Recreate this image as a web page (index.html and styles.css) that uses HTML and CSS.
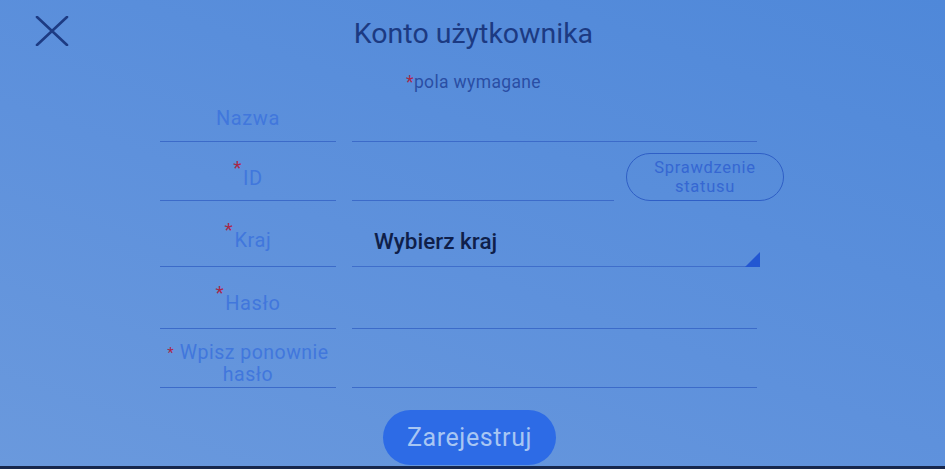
FILE: index.html
```html
<!DOCTYPE html>
<html lang="pl">
<head>
<meta charset="utf-8">
<title>Konto użytkownika</title>
<link rel="stylesheet" href="styles.css">
</head>
<body>
<div class="screen">
  <header class="header">
    <button class="close" aria-label="Zamknij">
      <svg width="34" height="30" viewBox="0 0 34 30"><path d="M2 1 L32 29 M32 1 L2 29" stroke="#1d3b83" stroke-width="2.6" fill="none" stroke-linecap="round"/></svg>
    </button>
    <h1 class="title">Konto użytkownika</h1>
    <span></span>
  </header>
  <p class="note"><span class="req">*</span>pola wymagane</p>
  <div class="form">
    <div class="row r1">
      <div class="label"><span>Nazwa</span></div>
      <div class="field"></div>
    </div>
    <div class="row r2">
      <div class="label"><span><sup class="req">*</sup>ID</span></div>
      <div class="field split">
        <div class="line"></div>
        <button class="status">Sprawdzenie<br>statusu</button>
      </div>
    </div>
    <div class="row r3">
      <div class="label"><span><sup class="req">*</sup>Kraj</span></div>
      <div class="field select"><span>Wybierz kraj</span><span class="tri"></span></div>
    </div>
    <div class="row r4">
      <div class="label"><span><sup class="req">*</sup>Hasło</span></div>
      <div class="field"></div>
    </div>
    <div class="row r5">
      <div class="label two"><span><span class="req small">*</span> Wpisz ponownie<br>hasło</span></div>
      <div class="field"></div>
    </div>
  </div>
  <div class="actions">
    <button class="submit">Zarejestruj</button>
  </div>
  <div class="bezel"></div>
</div>
</body>
</html>
```
FILE: styles.css
```css
* { box-sizing: border-box; }
html, body { margin: 0; padding: 0; }
body {
  width: 945px;
  height: 469px;
  overflow: hidden;
  font-family: Roboto, "Noto Sans", "Liberation Sans", sans-serif;
}
.screen {
  width: 945px;
  height: 469px;
  display: flex;
  flex-direction: column;
  background: linear-gradient(20deg, #6a99dd 0%, #5e91dc 45%, #4f88d9 100%);
}
.header {
  display: grid;
  grid-template-columns: 1fr auto 1fr;
  align-items: center;
  height: 68px;
  padding: 6px 0 0 0;
}
.close {
  border: 0;
  background: none;
  padding: 0;
  width: 34px;
  height: 30px;
  justify-self: start;
  margin-top: -12px;
  margin-left: 35px;
}
.close svg { display: block; }
.title {
  margin: 0;
  font-size: 28.5px;
  font-weight: 400;
  color: #1c3a82;
  margin-top: -8px;
  padding-left: 2px;
}
.note {
  margin: 4px 0 0;
  text-align: center;
  font-size: 17.5px;
  letter-spacing: 0.35px;
  color: #2a4ea4;
  height: 24px;
  line-height: 20px;
  padding-left: 2px;
}
.req { color: #a8284a; }
.form {
  margin-left: 160px;
  width: 597px;
  display: flex;
  flex-direction: column;
}
.row {
  display: grid;
  grid-template-columns: 176px 405px;
  column-gap: 16px;
}
.r1 { height: 46px; }
.r2 { height: 59px; }
.r3 { height: 66px; }
.r4 { height: 62px; }
.r5 { height: 59px; }
.label {
  border-bottom: 1.5px solid #3c6bc9;
  display: flex;
  align-items: flex-end;
  justify-content: center;
  text-align: center;
  color: #4177dc;
  font-size: 20px;
  line-height: 20px;
  letter-spacing: 0.6px;
}
.r1 .label { padding-bottom: 13px; }
.r2 .label { padding-bottom: 12px; }
.r3 .label { padding-bottom: 16px; }
.r4 .label { padding-bottom: 15px; }
.label sup {
  font-size: 19px;
  line-height: 0;
  position: relative;
  top: -3px;
  margin-right: 1px;
  vertical-align: super;
}
.label.two {
  line-height: 22px;
  padding-bottom: 1px;
  font-size: 19.5px;
  letter-spacing: 0.5px;
}
.label .small { font-size: 15px; vertical-align: 1px; }
.field {
  border-bottom: 1.5px solid #3c6bc9;
  position: relative;
}
.field.split {
  border-bottom: 0;
  display: flex;
  align-items: flex-end;
  justify-content: space-between;
  margin-right: -27px;
}
.field.split .line {
  width: 262px;
  border-bottom: 1.5px solid #3c6bc9;
}
.status {
  width: 158px;
  height: 48px;
  border: 1.5px solid #2f5fc6;
  border-radius: 24px;
  background: transparent;
  color: #3567d2;
  font-family: inherit;
  font-size: 16.5px;
  line-height: 19px;
  letter-spacing: 0.7px;
  padding: 0;
  margin-bottom: 0;
}
.field.select {
  display: flex;
  align-items: flex-end;
  padding: 0 0 13px 22px;
  font-size: 22.5px;
  line-height: 24px;
  font-weight: 500;
  color: #0f1f4a;
  border-bottom-color: #3f6ecb;
}
.tri {
  position: absolute;
  right: -3px;
  bottom: -1px;
  width: 15px;
  height: 15px;
  background: #2357d2;
  clip-path: polygon(100% 0, 100% 100%, 0 100%);
}
.actions {
  display: flex;
  justify-content: center;
  padding-top: 22px;
  padding-right: 6px;
}
.submit {
  width: 173px;
  height: 55px;
  border: 0;
  border-radius: 28px;
  background: #2d6be6;
  color: #a8c6f3;
  font-family: inherit;
  font-size: 25px;
  letter-spacing: 0.6px;
}
.bezel {
  margin-top: auto;
  height: 3px;
  background: #17274c;
}
```
